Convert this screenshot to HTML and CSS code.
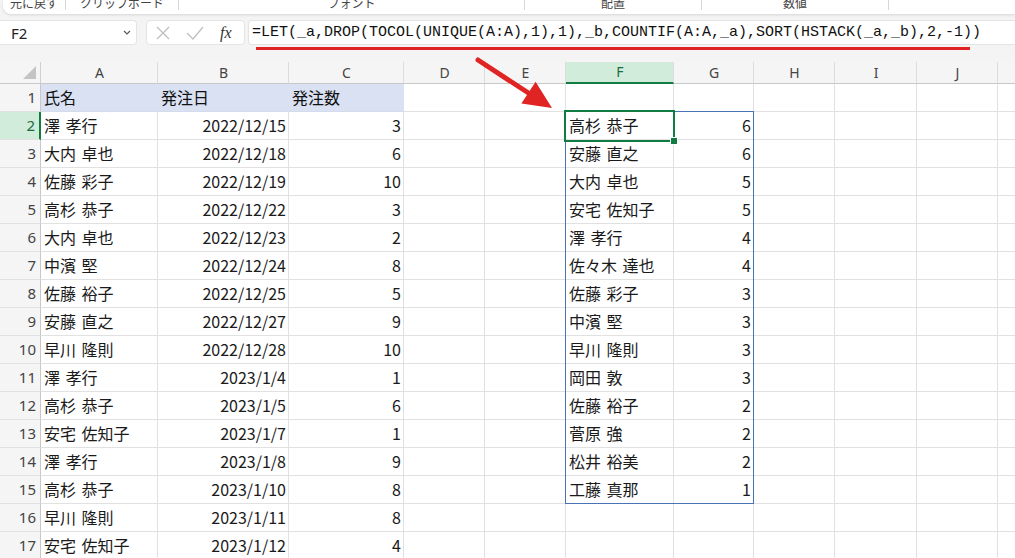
FILE: index.html
```html
<!DOCTYPE html>
<html lang="ja">
<head>
  <meta charset="UTF-8">
  <meta name="viewport" content="width=device-width, initial-scale=1.0">
  <title>発注集計</title>
  <link rel="stylesheet" href="styles.css">
</head>
<body>

  <div class="ribbon">
    <div class="ribbon-group g-undo">元に戻す</div>
    <div class="ribbon-group g-clip">クリップボード</div>
    <div class="ribbon-group g-font">フォント</div>
    <div class="ribbon-group g-align">配置</div>
    <div class="ribbon-group g-number">数値</div>
    <div class="ribbon-group g-rest"></div>
  </div>

  <div class="formula-bar">
    <div class="name-box">
      <span>F2</span>
      <svg class="chevron" width="8" height="5" viewBox="0 0 8 5"><path d="M1 1l3 3 3-3" fill="none" stroke="#555" stroke-width="1.1"/></svg>
    </div>
    <div class="fx-box">
      <svg class="fx-icon" width="14" height="14" viewBox="0 0 14 14"><path d="M1 1l12 12M13 1L1 13" stroke="#bdbdbd" stroke-width="1.2" fill="none"/></svg>
      <svg class="fx-icon" width="18" height="14" viewBox="0 0 18 14"><path d="M1 7l6 6L17 1" stroke="#bdbdbd" stroke-width="1.2" fill="none"/></svg>
      <span class="fx">fx</span>
    </div>
    <div class="formula-input">=LET(_a,DROP(TOCOL(UNIQUE(A:A),1),1),_b,COUNTIF(A:A,_a),SORT(HSTACK(_a,_b),2,-1))</div>
  </div>

  <div class="sheet" id="sheet">
    <div class="spill"></div>
    <div class="selection"><span class="fill-handle"></span></div>
  </div>

  <!-- annotation: underline under the formula and arrow to the result -->
  <div class="mark-line"></div>
  <svg class="mark-arrow" width="90" height="60" viewBox="0 0 90 60">
    <line x1="8" y1="5" x2="60" y2="39" stroke="#e02323" stroke-width="5" stroke-linecap="round"/>
    <polygon points="82,53 51.4,48.6 65.6,26.8" fill="#e02323"/>
  </svg>

  <script>
    const orders = [
      ['澤 孝行', '2022/12/15', 3],
      ['大内 卓也', '2022/12/18', 6],
      ['佐藤 彩子', '2022/12/19', 10],
      ['高杉 恭子', '2022/12/22', 3],
      ['大内 卓也', '2022/12/23', 2],
      ['中濱 堅', '2022/12/24', 8],
      ['佐藤 裕子', '2022/12/25', 5],
      ['安藤 直之', '2022/12/27', 9],
      ['早川 隆則', '2022/12/28', 10],
      ['澤 孝行', '2023/1/4', 1],
      ['高杉 恭子', '2023/1/5', 6],
      ['安宅 佐知子', '2023/1/7', 1],
      ['澤 孝行', '2023/1/8', 9],
      ['高杉 恭子', '2023/1/10', 8],
      ['早川 隆則', '2023/1/11', 8],
      ['安宅 佐知子', '2023/1/12', 4],
    ];

    // result of the spilled formula in F2:G15
    const ranking = [
      ['高杉 恭子', 6],
      ['安藤 直之', 6],
      ['大内 卓也', 5],
      ['安宅 佐知子', 5],
      ['澤 孝行', 4],
      ['佐々木 達也', 4],
      ['佐藤 彩子', 3],
      ['中濱 堅', 3],
      ['早川 隆則', 3],
      ['岡田 敦', 3],
      ['佐藤 裕子', 2],
      ['菅原 強', 2],
      ['松井 裕美', 2],
      ['工藤 真那', 1],
    ];

    const columns = ['A', 'B', 'C', 'D', 'E', 'F', 'G', 'H', 'I', 'J', ''];
    const sheet = document.getElementById('sheet');

    function addCell(text, cls) {
      const el = document.createElement('div');
      el.className = 'cell' + (cls ? ' ' + cls : '');
      el.textContent = text;
      sheet.appendChild(el);
      return el;
    }

    // header row
    const corner = addCell('', 'corner');
    corner.innerHTML = '<svg width="13" height="13" viewBox="0 0 13 13"><polygon points="13,0 13,13 0,13" fill="#c4c4c4"/></svg>';
    columns.forEach(c => addCell(c, c === 'F' ? 'col-head active' : 'col-head'));

    for (let r = 1; r <= 17; r++) {
      addCell(r, r === 2 ? 'row-head active' : 'row-head');

      if (r === 1) {
        addCell('氏名', 'title');
        addCell('発注日', 'title');
        addCell('発注数', 'title');
      } else {
        const o = orders[r - 2];
        addCell(o[0]);
        addCell(o[1], 'num');
        addCell(o[2], 'num');
      }

      addCell('');
      addCell('');

      const rk = r >= 2 ? ranking[r - 2] : null;
      if (rk) {
        addCell(rk[0]);
        addCell(rk[1], 'num');
      } else {
        addCell('');
        addCell('');
      }

      for (let i = 0; i < 4; i++) addCell('');
    }
  </script>

</body>
</html>
```

FILE: styles.css
```css
/* Basic layout */
body {
  margin: 0;
  height: 558px;
  overflow: hidden;
  position: relative;
  background-color: #f4f4f4;
  font-family: "Noto Sans CJK JP", sans-serif;
}

/* Ribbon (only the bottom of the labels is visible) */
.ribbon {
  display: flex;
  height: 14px;
  margin-left: 3px;
  background: #fff;
  border-radius: 0 0 0 8px;
  box-shadow: 0 1px 3px rgba(0, 0, 0, 0.12);
  overflow: hidden;
}

.ribbon-group {
  flex: none;
  height: 10px;
  line-height: 6px;
  font-size: 12px;
  color: #444;
  text-align: center;
  white-space: nowrap;
  border-right: 1px solid #d6d6d6;
  box-sizing: border-box;
}

.g-undo { width: 63px; }
.g-clip { width: 113px; }
.g-font { width: 346px; }
.g-align { width: 177px; }
.g-number { width: 187px; }
.g-rest { flex: 1; border-right: none; }

/* Formula bar */
.formula-bar {
  display: flex;
  height: 25px;
  margin-top: 6px;
}

.name-box {
  width: 137px;
  box-sizing: border-box;
  display: flex;
  align-items: center;
  justify-content: space-between;
  padding: 0 5px 0 11px;
  background: #fff;
  border: 1px solid #e4e4e4;
  border-left: none;
  border-radius: 0 4px 4px 0;
  font-family: "Noto Sans", sans-serif;
  font-size: 15px;
  color: #222;
}

.fx-box {
  width: 99px;
  margin-left: 9px;
  box-sizing: border-box;
  display: flex;
  align-items: center;
  padding-left: 9px;
  background: #fff;
  border: 1px solid #e4e4e4;
  border-radius: 4px;
}

.fx-icon { flex: none; }
.fx-icon + .fx-icon { margin-left: 16px; }

.fx {
  margin-left: 16px;
  font-family: "Liberation Serif", serif;
  font-style: italic;
  font-size: 16px;
  color: #333;
}

.formula-input {
  flex: 1;
  margin-left: 3px;
  padding-left: 3px;
  background: #fff;
  border: 1px solid #e4e4e4;
  border-right: none;
  border-radius: 4px 0 0 4px;
  font-family: "Liberation Mono", monospace;
  font-size: 15px;
  line-height: 23px;
  color: #111;
  white-space: nowrap;
  overflow: hidden;
}

/* Worksheet grid */
.sheet {
  position: relative;
  display: grid;
  grid-template-columns: 41px 117px 131px 115px 81px 81px 108px 80px 81px 82px 81px 100px;
  grid-template-rows: 22px repeat(17, 28px);
  margin-top: 17px;
  background: #fff;
}

.cell {
  box-sizing: border-box;
  padding: 0 2px 0 3px;
  border-right: 1px solid #e1e1e1;
  border-bottom: 1px solid #e1e1e1;
  font-size: 16px;
  line-height: 27px;
  word-spacing: 2px;
  color: #1a1a1a;
  white-space: nowrap;
  overflow: hidden;
}

.num { text-align: right; }

.title {
  background: #d9e1f2;
  border-right-color: #d9e1f2;
  border-bottom-color: #d3dbec;
  color: #111;
}

.corner {
  display: flex;
  align-items: flex-end;
  justify-content: flex-end;
  padding: 0 4px 4px 0;
  background: #f5f5f5;
  border-right-color: #cfcfcf;
  border-bottom-color: #c8c8c8;
}

.col-head {
  background: #f5f5f5;
  text-align: center;
  font-family: "Noto Sans", sans-serif;
  font-size: 14px;
  line-height: 21px;
  color: #444;
  border-right-color: #dcdcdc;
  border-bottom-color: #c8c8c8;
}

.row-head {
  background: #f5f5f5;
  text-align: right;
  padding-right: 4px;
  font-family: "Noto Sans", sans-serif;
  font-size: 15px;
  color: #444;
  border-right-color: #c8c8c8;
  border-bottom-color: #e1e1e1;
}

.col-head.active {
  background: #d2ecdc;
  color: #1b6b3f;
  border-bottom: 2px solid #107c41;
  line-height: 20px;
}

.row-head.active {
  background: #d2ecdc;
  color: #1b6b3f;
  border-right: 2px solid #107c41;
}

/* Outline of the spilled range F2:G15 */
.spill {
  position: absolute;
  grid-column: 7 / 9;
  grid-row: 3 / 17;
  top: -1px;
  left: -1px;
  right: 0;
  bottom: 0;
  border: 1px solid #4a73b5;
}

/* Active cell F2 */
.selection {
  position: absolute;
  grid-column: 7 / 8;
  grid-row: 3 / 4;
  top: -2px;
  left: -2px;
  right: -1px;
  bottom: -2px;
  border: 2px solid #107c41;
  z-index: 1;
}

.fill-handle {
  position: absolute;
  right: -5px;
  bottom: -5px;
  width: 6px;
  height: 6px;
  background: #107c41;
  border: 1px solid #fff;
}

/* Red annotation marks */
.mark-line {
  position: absolute;
  left: 256px;
  top: 47px;
  width: 714px;
  height: 3px;
  background: #e02323;
}

.mark-arrow {
  position: absolute;
  left: 470px;
  top: 55px;
  z-index: 2;
}
```
